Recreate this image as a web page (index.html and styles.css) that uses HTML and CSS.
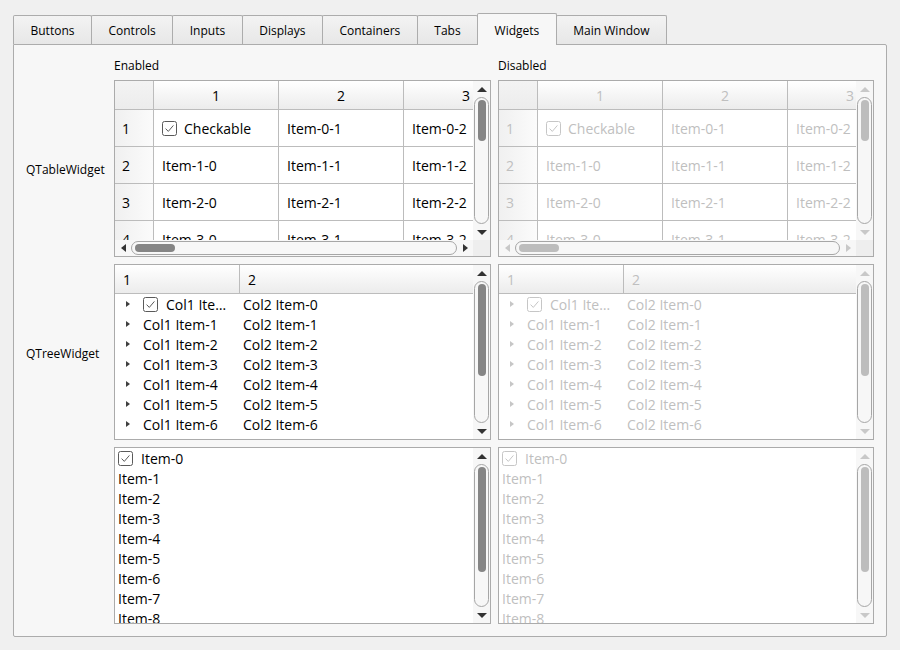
FILE: index.html
```html
<!DOCTYPE html>
<html>
<head>
<meta charset="utf-8">
<title>Widgets</title>
<link rel="stylesheet" href="styles.css">
</head>
<body>
<div class="window">
  <div class="tabbar">
    <div class="tab">Buttons</div>
    <div class="tab">Controls</div>
    <div class="tab">Inputs</div>
    <div class="tab">Displays</div>
    <div class="tab">Containers</div>
    <div class="tab">Tabs</div>
    <div class="tab active">Widgets</div>
    <div class="tab">Main Window</div>
  </div>
  <div class="pane">
    <div class="grid">
      <div></div>
      <div class="caption">Enabled</div>
      <div class="caption">Disabled</div>

      <div class="rowlabel">QTableWidget</div>
      <div class="box">
        <div class="main">
          <div class="viewport">
            <div class="tgrid">
              <div class="hc"></div><div class="ch">1</div><div class="ch">2</div><div class="ch">3</div>
              <div class="rh">1</div><div class="cell"><svg class="cb" width="15" height="15" viewBox="0 0 15 15"><rect x="0.5" y="0.5" width="14" height="14" rx="2" fill="#fff" stroke="currentColor"/><path d="M3.6 7.6 L6.3 10.4 L11.4 4.4" fill="none" stroke="currentColor" stroke-width="1"/></svg>Checkable</div><div class="cell">Item-0-1</div><div class="cell">Item-0-2</div>
              <div class="rh">2</div><div class="cell">Item-1-0</div><div class="cell">Item-1-1</div><div class="cell">Item-1-2</div>
              <div class="rh">3</div><div class="cell">Item-2-0</div><div class="cell">Item-2-1</div><div class="cell">Item-2-2</div>
              <div class="rh">4</div><div class="cell">Item-3-0</div><div class="cell">Item-3-1</div><div class="cell">Item-3-2</div>
            </div>
          </div>
          <div class="vscroll">
            <div class="sarr"><i class="up"></i></div>
            <div class="vgroove"><div class="vhandle" style="height:41px"></div></div>
            <div class="sarr"><i class="down"></i></div>
          </div>
        </div>
        <div class="hbar">
          <div class="hscroll">
            <div class="harr"><i class="left"></i></div>
            <div class="hgroove"><div class="hhandle" style="width:40px"></div></div>
            <div class="harr"><i class="right"></i></div>
          </div>
          <div class="sc-corner"></div>
        </div>
      </div>
      <div class="box dis">
        <div class="main">
          <div class="viewport">
            <div class="tgrid">
              <div class="hc"></div><div class="ch">1</div><div class="ch">2</div><div class="ch">3</div>
              <div class="rh">1</div><div class="cell"><svg class="cb" width="15" height="15" viewBox="0 0 15 15"><rect x="0.5" y="0.5" width="14" height="14" rx="2" fill="#fff" stroke="currentColor"/><path d="M3.6 7.6 L6.3 10.4 L11.4 4.4" fill="none" stroke="currentColor" stroke-width="1"/></svg>Checkable</div><div class="cell">Item-0-1</div><div class="cell">Item-0-2</div>
              <div class="rh">2</div><div class="cell">Item-1-0</div><div class="cell">Item-1-1</div><div class="cell">Item-1-2</div>
              <div class="rh">3</div><div class="cell">Item-2-0</div><div class="cell">Item-2-1</div><div class="cell">Item-2-2</div>
              <div class="rh">4</div><div class="cell">Item-3-0</div><div class="cell">Item-3-1</div><div class="cell">Item-3-2</div>
            </div>
          </div>
          <div class="vscroll">
            <div class="sarr"><i class="up"></i></div>
            <div class="vgroove"><div class="vhandle" style="height:41px"></div></div>
            <div class="sarr"><i class="down"></i></div>
          </div>
        </div>
        <div class="hbar">
          <div class="hscroll">
            <div class="harr"><i class="left"></i></div>
            <div class="hgroove"><div class="hhandle" style="width:40px"></div></div>
            <div class="harr"><i class="right"></i></div>
          </div>
          <div class="sc-corner"></div>
        </div>
      </div>

      <div class="rowlabel">QTreeWidget</div>
      <div class="box">
        <div class="main">
          <div class="viewport">
            <div class="thead"><div class="th first">1</div><div class="th">2</div></div>
            <div class="rows">
              <div class="trow"><span class="branch"><i class="tri"></i></span><span class="c1"><svg class="cb" width="15" height="15" viewBox="0 0 15 15"><rect x="0.5" y="0.5" width="14" height="14" rx="2" fill="#fff" stroke="currentColor"/><path d="M3.6 7.6 L6.3 10.4 L11.4 4.4" fill="none" stroke="currentColor" stroke-width="1"/></svg><span class="ell">Col1 Item-0</span></span><span class="c2">Col2 Item-0</span></div>
              <div class="trow"><span class="branch"><i class="tri"></i></span><span class="c1"><span class="ell">Col1 Item-1</span></span><span class="c2">Col2 Item-1</span></div>
              <div class="trow"><span class="branch"><i class="tri"></i></span><span class="c1"><span class="ell">Col1 Item-2</span></span><span class="c2">Col2 Item-2</span></div>
              <div class="trow"><span class="branch"><i class="tri"></i></span><span class="c1"><span class="ell">Col1 Item-3</span></span><span class="c2">Col2 Item-3</span></div>
              <div class="trow"><span class="branch"><i class="tri"></i></span><span class="c1"><span class="ell">Col1 Item-4</span></span><span class="c2">Col2 Item-4</span></div>
              <div class="trow"><span class="branch"><i class="tri"></i></span><span class="c1"><span class="ell">Col1 Item-5</span></span><span class="c2">Col2 Item-5</span></div>
              <div class="trow"><span class="branch"><i class="tri"></i></span><span class="c1"><span class="ell">Col1 Item-6</span></span><span class="c2">Col2 Item-6</span></div>
            </div>
          </div>
          <div class="vscroll">
            <div class="sarr"><i class="up"></i></div>
            <div class="vgroove"><div class="vhandle" style="height:92px"></div></div>
            <div class="sarr"><i class="down"></i></div>
          </div>
        </div>
      </div>
      <div class="box dis">
        <div class="main">
          <div class="viewport">
            <div class="thead"><div class="th first">1</div><div class="th">2</div></div>
            <div class="rows">
              <div class="trow"><span class="branch"><i class="tri"></i></span><span class="c1"><svg class="cb" width="15" height="15" viewBox="0 0 15 15"><rect x="0.5" y="0.5" width="14" height="14" rx="2" fill="#fff" stroke="currentColor"/><path d="M3.6 7.6 L6.3 10.4 L11.4 4.4" fill="none" stroke="currentColor" stroke-width="1"/></svg><span class="ell">Col1 Item-0</span></span><span class="c2">Col2 Item-0</span></div>
              <div class="trow"><span class="branch"><i class="tri"></i></span><span class="c1"><span class="ell">Col1 Item-1</span></span><span class="c2">Col2 Item-1</span></div>
              <div class="trow"><span class="branch"><i class="tri"></i></span><span class="c1"><span class="ell">Col1 Item-2</span></span><span class="c2">Col2 Item-2</span></div>
              <div class="trow"><span class="branch"><i class="tri"></i></span><span class="c1"><span class="ell">Col1 Item-3</span></span><span class="c2">Col2 Item-3</span></div>
              <div class="trow"><span class="branch"><i class="tri"></i></span><span class="c1"><span class="ell">Col1 Item-4</span></span><span class="c2">Col2 Item-4</span></div>
              <div class="trow"><span class="branch"><i class="tri"></i></span><span class="c1"><span class="ell">Col1 Item-5</span></span><span class="c2">Col2 Item-5</span></div>
              <div class="trow"><span class="branch"><i class="tri"></i></span><span class="c1"><span class="ell">Col1 Item-6</span></span><span class="c2">Col2 Item-6</span></div>
            </div>
          </div>
          <div class="vscroll">
            <div class="sarr"><i class="up"></i></div>
            <div class="vgroove"><div class="vhandle" style="height:92px"></div></div>
            <div class="sarr"><i class="down"></i></div>
          </div>
        </div>
      </div>

      <div></div>
      <div class="box">
        <div class="main">
          <div class="viewport">
            <div class="rows">
              <div class="litem"><svg class="cb" width="15" height="15" viewBox="0 0 15 15"><rect x="0.5" y="0.5" width="14" height="14" rx="2" fill="#fff" stroke="currentColor"/><path d="M3.6 7.6 L6.3 10.4 L11.4 4.4" fill="none" stroke="currentColor" stroke-width="1"/></svg>Item-0</div>
              <div class="litem">Item-1</div>
              <div class="litem">Item-2</div>
              <div class="litem">Item-3</div>
              <div class="litem">Item-4</div>
              <div class="litem">Item-5</div>
              <div class="litem">Item-6</div>
              <div class="litem">Item-7</div>
              <div class="litem">Item-8</div>
            </div>
          </div>
          <div class="vscroll">
            <div class="sarr"><i class="up"></i></div>
            <div class="vgroove"><div class="vhandle" style="height:105px"></div></div>
            <div class="sarr"><i class="down"></i></div>
          </div>
        </div>
      </div>
      <div class="box dis">
        <div class="main">
          <div class="viewport">
            <div class="rows">
              <div class="litem"><svg class="cb" width="15" height="15" viewBox="0 0 15 15"><rect x="0.5" y="0.5" width="14" height="14" rx="2" fill="#fff" stroke="currentColor"/><path d="M3.6 7.6 L6.3 10.4 L11.4 4.4" fill="none" stroke="currentColor" stroke-width="1"/></svg>Item-0</div>
              <div class="litem">Item-1</div>
              <div class="litem">Item-2</div>
              <div class="litem">Item-3</div>
              <div class="litem">Item-4</div>
              <div class="litem">Item-5</div>
              <div class="litem">Item-6</div>
              <div class="litem">Item-7</div>
              <div class="litem">Item-8</div>
            </div>
          </div>
          <div class="vscroll">
            <div class="sarr"><i class="up"></i></div>
            <div class="vgroove"><div class="vhandle" style="height:105px"></div></div>
            <div class="sarr"><i class="down"></i></div>
          </div>
        </div>
      </div>
    </div>
  </div>
</div>
</body>
</html>
```

FILE: styles.css
```css
* { box-sizing: border-box; }

body {
  margin: 0;
  background: #f0f0f0;
  font-family: "Open Sans", "Noto Sans", sans-serif;
  color: #000;
}

.window {
  padding: 13px 0 0 13px;
  width: 887px;
}

/* ---------- tab bar ---------- */
.tabbar {
  display: flex;
  align-items: flex-end;
  height: 31px;
}

.tab {
  height: 29px;
  border: 1px solid #acacac;
  border-bottom: none;
  border-radius: 2px 2px 0 0;
  margin-left: -1px;
  padding: 1px 16.5px 0;
  font-size: 12px;
  line-height: 27px;
  white-space: nowrap;
  background: linear-gradient(#f3f3f3, #e7e7e7);
}

.tab:first-child { margin-left: 0; }

.tab.active {
  height: 32px;
  margin-bottom: -1px;
  padding-top: 3px;
  background: #f7f7f7;
  position: relative;
  z-index: 1;
}

/* ---------- pane ---------- */
.pane {
  width: 874px;
  height: 593px;
  border: 1px solid #acacac;
  border-radius: 0 2px 2px 2px;
  background: #f7f7f7;
  padding: 12px;
}

.grid {
  display: grid;
  grid-template-columns: 81px 377px 376px;
  grid-template-rows: 16px 177px 176px 177px;
  gap: 7px;
}

.caption {
  font-size: 12px;
  line-height: 16px;
  padding-top: 1px;
  white-space: nowrap;
}

.rowlabel {
  font-size: 12px;
  display: flex;
  align-items: center;
  padding-top: 2px;
  white-space: nowrap;
}

/* ---------- item views ---------- */
.box {
  border: 1px solid #ababab;
  background: #fff;
  display: flex;
  flex-direction: column;
  overflow: hidden;
  font-size: 14px;
}

.box .main {
  flex: 1;
  display: flex;
  min-height: 0;
}

.viewport {
  flex: 1;
  min-width: 0;
  overflow: hidden;
  background: #fff;
}

.cb {
  flex: none;
  color: #5a5a5a;
  display: block;
}

/* table */
.tgrid {
  display: grid;
  grid-template-columns: 39px 125px 125px 125px;
  grid-template-rows: 29px repeat(4, 37px);
  width: max-content;
}

.tgrid > div {
  border-right: 1px solid #bcbcbc;
  border-bottom: 1px solid #bcbcbc;
  white-space: nowrap;
  overflow: hidden;
  display: flex;
  align-items: center;
}

.hc { background: linear-gradient(#f3f3f3, #ececec); }

.ch {
  justify-content: center;
  background: linear-gradient(#ffffff, #ececec);
}

.rh {
  padding-left: 7px;
  background: linear-gradient(to right, #f0f0f0, #fbfbfb);
}

.cell { padding-left: 8px; }
.cell .cb { margin-right: 7px; }

/* tree */
.thead {
  display: flex;
  height: 29px;
  border-bottom: 1px solid #bcbcbc;
  background: linear-gradient(#ffffff, #ececec);
}

.th {
  display: flex;
  align-items: center;
  padding-left: 8px;
  flex: 1;
}

.th.first {
  flex: none;
  width: 125px;
  border-right: 1px solid #bcbcbc;
}

.rows { padding-top: 0; }

.trow {
  display: flex;
  align-items: center;
  height: 20px;
  white-space: nowrap;
}

.branch {
  flex: none;
  width: 28px;
  padding-left: 11px;
  display: flex;
  align-items: center;
}

.tri {
  width: 0;
  height: 0;
  border-top: 3.5px solid transparent;
  border-bottom: 3.5px solid transparent;
  border-left: 4px solid #3f3f3f;
}

.c1 {
  flex: none;
  width: 96px;
  padding-right: 4px;
  display: flex;
  align-items: center;
  overflow: hidden;
}

.c1 .cb { margin-right: 8px; }

.ell {
  min-width: 0;
  overflow: hidden;
  text-overflow: ellipsis;
}

.c2 { padding-left: 4px; }

/* list */
.litem {
  display: flex;
  align-items: center;
  height: 20px;
  padding-left: 3px;
  white-space: nowrap;
}

.litem .cb { margin-right: 8px; }

/* ---------- scroll bars ---------- */
.vscroll {
  flex: none;
  width: 17px;
  display: flex;
  flex-direction: column;
  background: #f7f7f7;
}

.sarr {
  flex: none;
  height: 16px;
  display: flex;
  align-items: center;
  justify-content: center;
}

.up, .down, .left, .right {
  width: 0;
  height: 0;
  display: block;
}

.up {
  border-left: 5px solid transparent;
  border-right: 5px solid transparent;
  border-bottom: 5px solid #333;
}

.down {
  border-left: 5px solid transparent;
  border-right: 5px solid transparent;
  border-top: 5px solid #333;
}

.left {
  border-top: 4.5px solid transparent;
  border-bottom: 4.5px solid transparent;
  border-right: 5px solid #333;
}

.right {
  border-top: 4.5px solid transparent;
  border-bottom: 4.5px solid transparent;
  border-left: 5px solid #333;
}

.vgroove {
  flex: 1;
  margin: 0 1px;
  border: 1px solid #a6a6a6;
  border-radius: 8px;
  padding-top: 2px;
  display: flex;
  justify-content: center;
}

.vhandle {
  width: 8px;
  border-radius: 4px;
  background: #858585;
}

.hbar {
  flex: none;
  height: 16px;
  display: flex;
}

.hscroll {
  flex: 1;
  display: flex;
  background: #f7f7f7;
}

.harr {
  flex: none;
  width: 16px;
  display: flex;
  align-items: center;
  justify-content: center;
}

.hgroove {
  flex: 1;
  margin: 1px 0;
  border: 1px solid #a6a6a6;
  border-radius: 8px;
  padding-left: 3px;
  display: flex;
  align-items: center;
}

.hhandle {
  height: 8px;
  border-radius: 4px;
  background: #858585;
}

.sc-corner {
  flex: none;
  width: 17px;
  background: #eeeeee;
}

/* ---------- disabled state ---------- */
.dis { color: #bfbfbf; }
.dis .cb { color: #c6c6c6; }
.dis .tri { border-left-color: #c6c6c6; }
.dis .up { border-bottom-color: #c8c8c8; }
.dis .down { border-top-color: #c8c8c8; }
.dis .left { border-right-color: #c8c8c8; }
.dis .right { border-left-color: #c8c8c8; }
.dis .vhandle, .dis .hhandle { background: #bdbdbd; }
```
